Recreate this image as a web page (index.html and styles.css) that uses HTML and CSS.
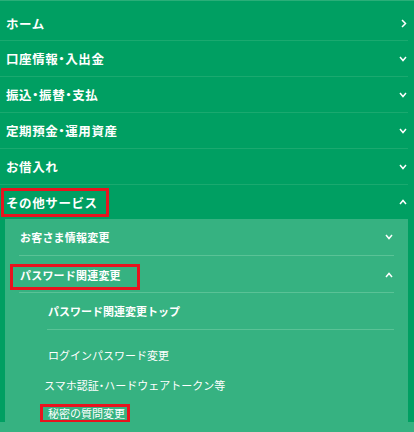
FILE: index.html
```html
<!DOCTYPE html>
<html lang="ja">
<head>
    <meta charset="UTF-8">
    <meta name="viewport" content="width=device-width, initial-scale=1.0">
    <title>メニュー</title>
    <link rel="stylesheet" href="styles.css">
</head>
<body>
    <!-- Global Menu -->
    <nav class="menu">
        <ul class="menu-list">
            <li class="menu-item">
                <a class="menu-link first" href="#">ホーム
                    <svg class="arrow" width="6" height="9" viewBox="0 0 6 9"><polyline points="1,1 4.5,4.5 1,8" /></svg>
                </a>
            </li>
            <li class="menu-item">
                <a class="menu-link" href="#"><span>口座情報<span class="dot">・</span>入出金</span>
                    <svg class="arrow" width="8" height="6" viewBox="0 0 8 6"><polyline points="1,1 4,4.5 7,1" /></svg>
                </a>
            </li>
            <li class="menu-item">
                <a class="menu-link" href="#"><span>振込<span class="dot">・</span>振替<span class="dot">・</span>支払</span>
                    <svg class="arrow" width="8" height="6" viewBox="0 0 8 6"><polyline points="1,1 4,4.5 7,1" /></svg>
                </a>
            </li>
            <li class="menu-item">
                <a class="menu-link" href="#"><span>定期預金<span class="dot">・</span>運用資産</span>
                    <svg class="arrow" width="8" height="6" viewBox="0 0 8 6"><polyline points="1,1 4,4.5 7,1" /></svg>
                </a>
            </li>
            <li class="menu-item">
                <a class="menu-link" href="#">お借入れ
                    <svg class="arrow" width="8" height="6" viewBox="0 0 8 6"><polyline points="1,1 4,4.5 7,1" /></svg>
                </a>
            </li>
            <li class="menu-item">
                <a class="menu-link open" href="#"><span class="mark mark-other">その他サービス</span>
                    <svg class="arrow" width="8" height="6" viewBox="0 0 8 6"><polyline points="1,5 4,1.5 7,5" /></svg>
                </a>

                <!-- Sub Menu -->
                <ul class="sub-list">
                    <li class="sub-item">
                        <a class="sub-link" href="#">お客さま情報変更
                            <svg class="arrow" width="8" height="6" viewBox="0 0 8 6"><polyline points="1,1 4,4.5 7,1" /></svg>
                        </a>
                    </li>
                    <li class="sub-item">
                        <a class="sub-link" href="#"><span class="mark mark-pass">パスワード関連変更</span>
                            <svg class="arrow" width="8" height="6" viewBox="0 0 8 6"><polyline points="1,5 4,1.5 7,5" /></svg>
                        </a>
                        <ul class="third-list">
                            <li><a class="third-link top" href="#">パスワード関連変更トップ</a></li>
                            <li><a class="third-link first-plain" href="#">ログインパスワード変更</a></li>
                            <li><a class="third-link wide" href="#">スマホ認証<span class="dot">・</span>ハードウェアトークン等</a></li>
                            <li><a class="third-link last" href="#"><span class="mark mark-secret">秘密の質問変更</span></a></li>
                        </ul>
                    </li>
                </ul>
            </li>
        </ul>
    </nav>
</body>
</html>
```

FILE: styles.css
```css
/* Basic Styling */
body {
    margin: 0;
    padding: 0;
    font-family: "Noto Sans CJK JP", "Noto Sans", sans-serif;
    background-color: #36b281;
    color: #fff;
}
ul {
    list-style: none;
    margin: 0;
    padding: 0;
}
a {
    color: #fff;
    text-decoration: none;
}
.dot { font-feature-settings: "palt"; }
/* Top Level */
.menu-list {
    background-color: #009f62;
    border-top: 1px solid #2aae78;
}
.menu-link {
    display: flex;
    justify-content: space-between;
    align-items: center;
    box-sizing: border-box;
    height: 36px;
    margin-right: 6px;
    padding: 0 1px 0 6px;
    border-bottom: 1px solid #1aa96f;
    font-size: 12.5px;
    font-weight: bold;
    letter-spacing: 0.6px;
}
.menu-link.first { height: 40px; padding-top: 5px; }
.menu-link.open { height: 34px; border-bottom: none; }
.arrow {
    fill: none;
    stroke: #fff;
    stroke-width: 1.5;
}
/* Highlight boxes */
.mark { position: relative; }
.mark::after {
    content: "";
    position: absolute;
    border: 3px solid #e8141e;
}
.mark-other::after { left: -5px; right: -11px; top: -5px; bottom: -5px; }
.mark-pass::after { left: -10px; right: -19px; top: -3px; bottom: -7px; }
.mark-secret::after { left: -8px; right: -5px; top: -1px; bottom: -2px; }
/* Second Level */
.sub-list {
    margin: 0 6px 0 5px;
    background-color: #36b281;
}
.sub-item { margin: 0 14px; }
.sub-link {
    display: flex;
    justify-content: space-between;
    align-items: center;
    box-sizing: border-box;
    height: 37px;
    padding: 0 1px;
    border-bottom: 1px solid #5ac296;
    font-size: 11px;
    font-weight: bold;
    letter-spacing: 0.2px;
}
.sub-item + .sub-item .sub-link { padding-top: 1px; }
/* Third Level */
.third-list { margin-left: 28px; }
.third-link {
    display: block;
    padding: 6px 1px;
    line-height: 18px;
    font-size: 11px;
}
.third-link.top {
    box-sizing: border-box;
    height: 37px;
    padding-top: 9px;
    border-bottom: 1px solid #5ac296;
    font-weight: bold;
}
.third-link.first-plain { margin-top: 10px; }
.third-link.wide { margin-left: -4px; }
.third-link.last { padding: 4px 1px 0; }
```
